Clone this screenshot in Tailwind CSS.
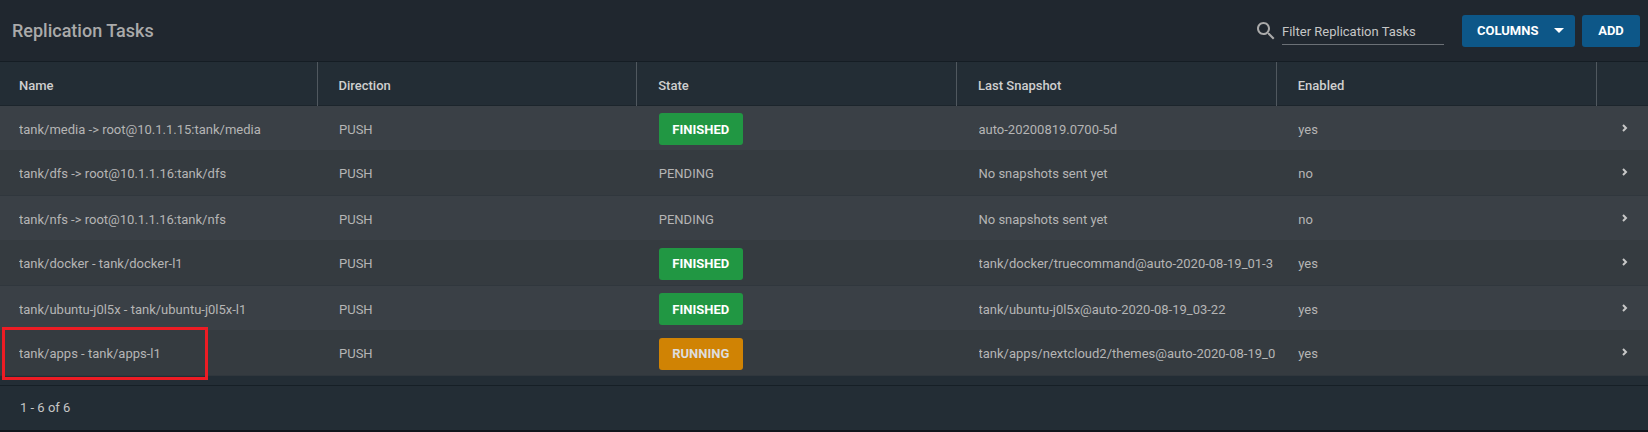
<!DOCTYPE html>
<html lang="en">
<head>
    <meta charset="UTF-8">
    <meta name="viewport" content="width=device-width, initial-scale=1.0">
    <title>Replication Tasks</title>
    <script src="https://cdn.jsdelivr.net/npm/@tailwindcss/browser@4"></script>
</head>
<body class="bg-[#0f151c] font-[Roboto,sans-serif] text-[13px] text-[#b5b5b5]">
    <main class="bg-[#232d35] border-b-2 border-[#11161d]">
        <!-- Title bar -->
        <header class="flex items-center justify-between h-[62px] pl-3 pr-2 bg-[#20272f] border-b border-[#151d24]">
            <h1 class="text-lg font-medium text-[#aaaaaa]">Replication Tasks</h1>
            <div class="flex items-center">
                <label for="filter" class="mr-1" aria-label="Filter Replication Tasks">
                    <svg class="w-6 h-6 fill-[#aaaaaa]" viewBox="0 0 24 24"><path d="M15.5 14h-.79l-.28-.27C15.41 12.59 16 11.11 16 9.5 16 5.91 13.09 3 9.5 3S3 5.91 3 9.5 5.91 16 9.5 16c1.61 0 3.09-.59 4.23-1.57l.27.28v.79l5 4.99L20.49 19l-4.99-5zm-6 0C7.01 14 5 11.99 5 9.5S7.01 5 9.5 5 14 7.01 14 9.5 11.99 14 9.5 14z"/></svg>
                </label>
                <input id="filter" type="text" placeholder="Filter Replication Tasks" class="w-[162px] h-7 mr-[18px] pt-[2px] border-b border-[#6b7076] bg-transparent text-[13px] text-[#c6c6c6] placeholder:text-[#c6c6c6] outline-none">
                <button type="button" class="flex items-center justify-between w-[113px] h-8 mr-[7px] pl-[15px] pr-[11px] rounded-[3px] bg-[#0d5788] font-bold text-white">
                    COLUMNS
                    <svg class="w-[10px] h-[5px] fill-white" viewBox="0 0 10 5"><path d="M0 0h10L5 5z"/></svg>
                </button>
                <button type="button" class="w-[58px] h-8 rounded-[3px] bg-[#0d5788] font-bold text-white">ADD</button>
            </div>
        </header>

        <!-- Task list -->
        <table class="w-full table-fixed text-left">
            <colgroup>
                <col class="w-[317px]">
                <col><col><col><col>
                <col class="w-[52px]">
            </colgroup>
            <thead>
                <tr class="h-[43px] border-b border-[#1c252c] text-[#cfcfcf]">
                    <th class="pl-[19px] pt-[5px] font-medium border-r border-[#50585f]">Name</th>
                    <th class="pl-[21px] pt-[5px] font-medium border-r border-[#50585f]">Direction</th>
                    <th class="pl-[21px] pt-[5px] font-medium border-r border-[#50585f]">State</th>
                    <th class="pl-[21px] pt-[5px] font-medium border-r border-[#50585f]">Last Snapshot</th>
                    <th class="pl-[21px] pt-[5px] font-medium border-r border-[#50585f]">Enabled</th>
                    <td></td>
                </tr>
            </thead>
            <tbody>
                <tr class="h-[45px] bg-[#3a4046]">
                    <td class="pl-[19px] pt-[3px]"><div class="overflow-hidden whitespace-nowrap">tank/media -&gt; root@10.1.1.15:tank/media</div></td>
                    <td class="pl-[22px] pt-[3px]">PUSH</td>
                    <td class="pl-[22px] pt-[3px]"><button type="button" class="block w-[84px] h-8 rounded-[3px] bg-[#219743] font-bold text-white">FINISHED</button></td>
                    <td class="pl-[22px] pt-[3px]"><div class="overflow-hidden whitespace-nowrap">auto-20200819.0700-5d</div></td>
                    <td class="pl-[22px] pt-[3px]">yes</td>
                    <td class="pl-[26px]"><button type="button" aria-label="Expand" class="block"><svg class="w-[6px] h-2 fill-none stroke-[#c8c8c8] stroke-2" viewBox="0 0 6 8"><path d="M1 1l3 3-3 3"/></svg></button></td>
                </tr>
                <tr class="h-[45px] bg-[#353b40] border-b border-[#30373d]">
                    <td class="pl-[19px] pt-[3px]"><div class="overflow-hidden whitespace-nowrap">tank/dfs -&gt; root@10.1.1.16:tank/dfs</div></td>
                    <td class="pl-[22px] pt-[3px]">PUSH</td>
                    <td class="pl-[22px] pt-[3px]">PENDING</td>
                    <td class="pl-[22px] pt-[3px]"><div class="overflow-hidden whitespace-nowrap">No snapshots sent yet</div></td>
                    <td class="pl-[22px] pt-[3px]">no</td>
                    <td class="pl-[26px]"><button type="button" aria-label="Expand" class="block"><svg class="w-[6px] h-2 fill-none stroke-[#c8c8c8] stroke-2" viewBox="0 0 6 8"><path d="M1 1l3 3-3 3"/></svg></button></td>
                </tr>
                <tr class="h-[45px] bg-[#3a4046]">
                    <td class="pl-[19px] pt-[3px]"><div class="overflow-hidden whitespace-nowrap">tank/nfs -&gt; root@10.1.1.16:tank/nfs</div></td>
                    <td class="pl-[22px] pt-[3px]">PUSH</td>
                    <td class="pl-[22px] pt-[3px]">PENDING</td>
                    <td class="pl-[22px] pt-[3px]"><div class="overflow-hidden whitespace-nowrap">No snapshots sent yet</div></td>
                    <td class="pl-[22px] pt-[3px]">no</td>
                    <td class="pl-[26px]"><button type="button" aria-label="Expand" class="block"><svg class="w-[6px] h-2 fill-none stroke-[#c8c8c8] stroke-2" viewBox="0 0 6 8"><path d="M1 1l3 3-3 3"/></svg></button></td>
                </tr>
                <tr class="h-[45px] bg-[#353b40] border-b border-[#30373d]">
                    <td class="pl-[19px] pt-[3px]"><div class="overflow-hidden whitespace-nowrap">tank/docker - tank/docker-l1</div></td>
                    <td class="pl-[22px] pt-[3px]">PUSH</td>
                    <td class="pl-[22px] pt-[3px]"><button type="button" class="block w-[84px] h-8 rounded-[3px] bg-[#219743] font-bold text-white">FINISHED</button></td>
                    <td class="pl-[22px] pt-[3px]"><div class="overflow-hidden whitespace-nowrap">tank/docker/truecommand@auto-2020-08-19_01-3</div></td>
                    <td class="pl-[22px] pt-[3px]">yes</td>
                    <td class="pl-[26px]"><button type="button" aria-label="Expand" class="block"><svg class="w-[6px] h-2 fill-none stroke-[#c8c8c8] stroke-2" viewBox="0 0 6 8"><path d="M1 1l3 3-3 3"/></svg></button></td>
                </tr>
                <tr class="h-[45px] bg-[#3a4046]">
                    <td class="pl-[19px] pt-[3px]"><div class="overflow-hidden whitespace-nowrap">tank/ubuntu-j0l5x - tank/ubuntu-j0l5x-l1</div></td>
                    <td class="pl-[22px] pt-[3px]">PUSH</td>
                    <td class="pl-[22px] pt-[3px]"><button type="button" class="block w-[84px] h-8 rounded-[3px] bg-[#219743] font-bold text-white">FINISHED</button></td>
                    <td class="pl-[22px] pt-[3px]"><div class="overflow-hidden whitespace-nowrap">tank/ubuntu-j0l5x@auto-2020-08-19_03-22</div></td>
                    <td class="pl-[22px] pt-[3px]">yes</td>
                    <td class="pl-[26px]"><button type="button" aria-label="Expand" class="block"><svg class="w-[6px] h-2 fill-none stroke-[#c8c8c8] stroke-2" viewBox="0 0 6 8"><path d="M1 1l3 3-3 3"/></svg></button></td>
                </tr>
                <tr class="h-[45px] bg-[#353b40] border-b border-[#30373d]">
                    <td class="pl-[19px] pt-[3px] relative">
                        <div class="overflow-hidden whitespace-nowrap">tank/apps - tank/apps-l1</div>
                        <div class="absolute left-[2px] -top-[3px] w-[206px] h-[53px] border-3 border-[#ed1c24] pointer-events-none"></div>
                    </td>
                    <td class="pl-[22px] pt-[3px]">PUSH</td>
                    <td class="pl-[22px] pt-[3px]"><button type="button" class="block w-[84px] h-8 rounded-[3px] bg-[#d08304] font-bold text-[#dddddd]">RUNNING</button></td>
                    <td class="pl-[22px] pt-[3px]"><div class="overflow-hidden whitespace-nowrap">tank/apps/nextcloud2/themes@auto-2020-08-19_0</div></td>
                    <td class="pl-[22px] pt-[3px]">yes</td>
                    <td class="pl-[26px]"><button type="button" aria-label="Expand" class="block"><svg class="w-[6px] h-2 fill-none stroke-[#c8c8c8] stroke-2" viewBox="0 0 6 8"><path d="M1 1l3 3-3 3"/></svg></button></td>
                </tr>
            </tbody>
        </table>

        <!-- Pager -->
        <footer class="flex items-center h-[45px] mt-[9px] pl-5 border-t border-[#161f26] text-[#c6c6c6]">1 - 6 of 6</footer>
    </main>
</body>
</html>
